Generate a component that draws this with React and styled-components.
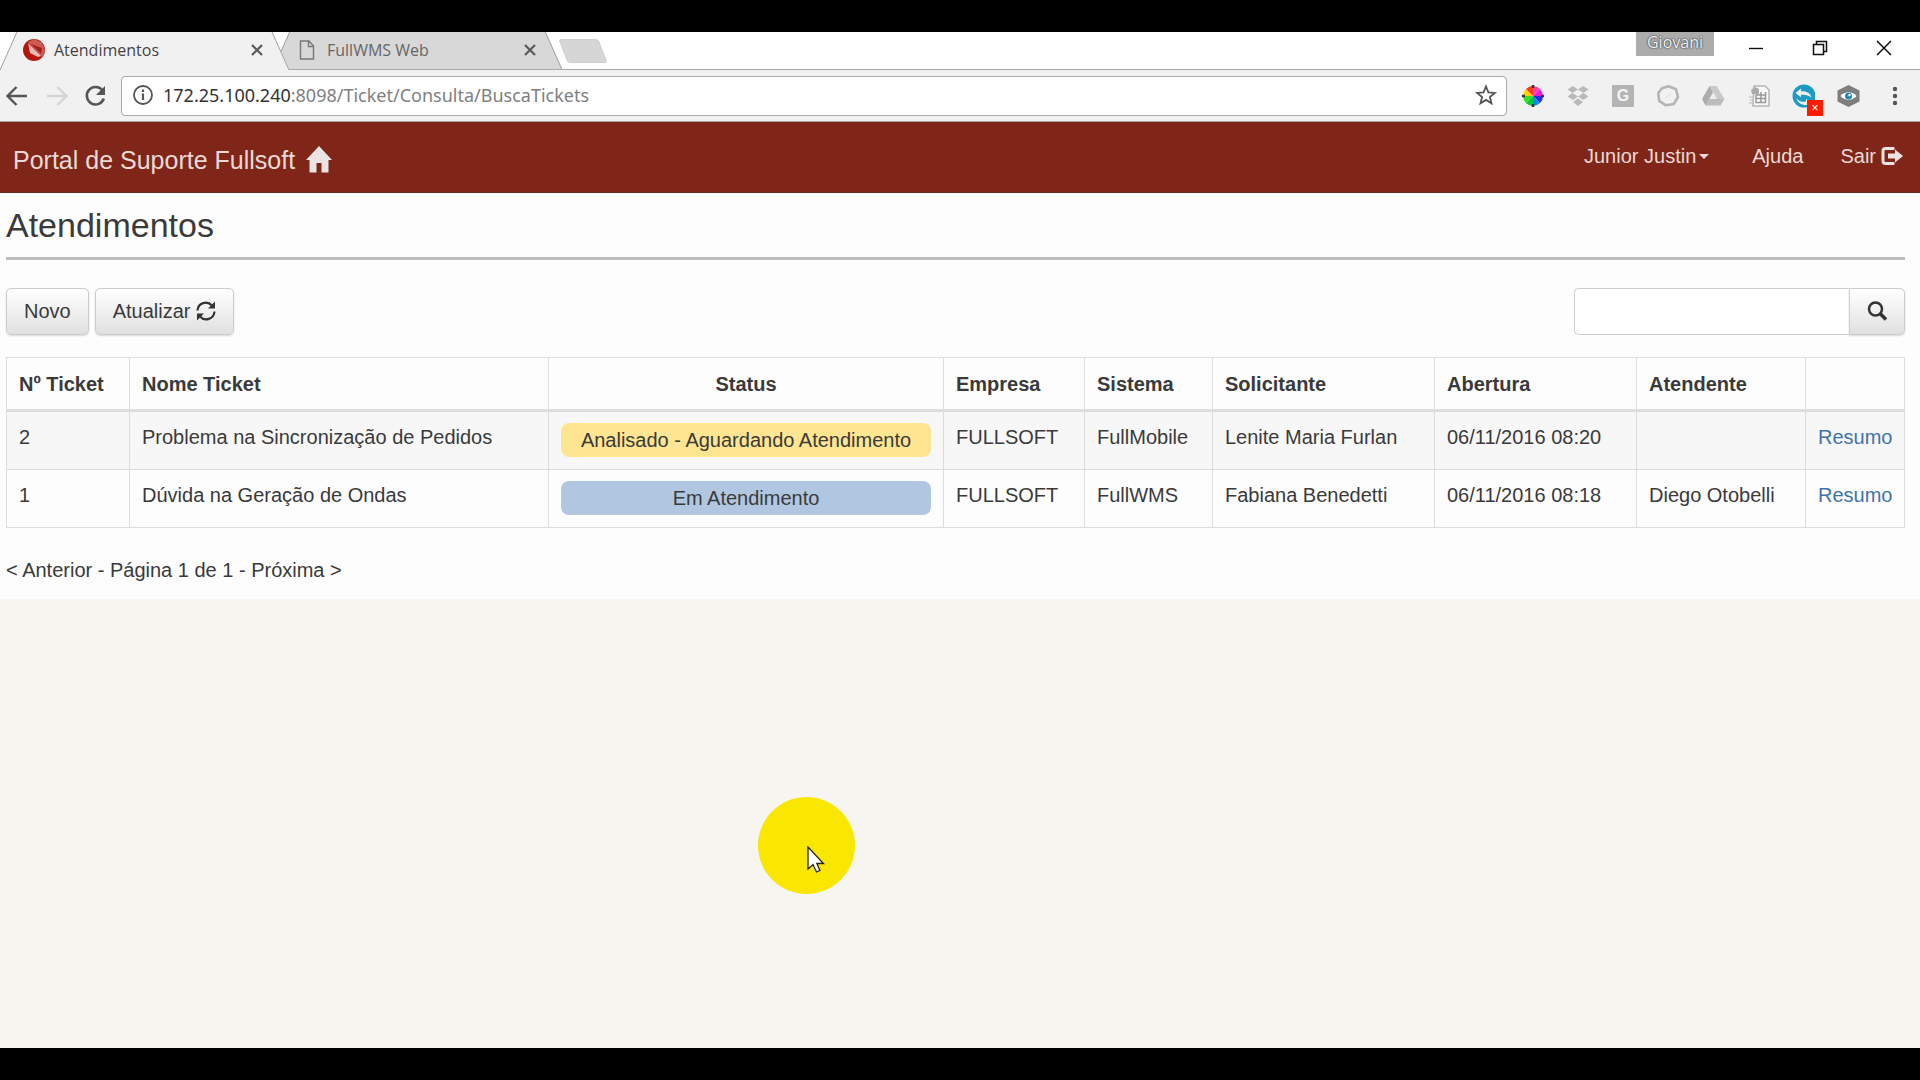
import React from 'react'
import styled, { createGlobalStyle, css } from 'styled-components'

const GlobalStyle = createGlobalStyle`
  * {
    box-sizing: border-box;
  }
  body {
    margin: 0;
    background: #000;
    color: #3a3a3a;
    font-family: "Liberation Sans", Arial, sans-serif;
    font-size: 20px;
    line-height: 28px;
  }
  button, input {
    font: inherit;
    color: inherit;
  }
  svg {
    display: block;
    flex: none;
  }
`;

const Screen = styled.div`
  min-height: 100vh;
  padding: 32px 0;
  display: flex;
  flex-direction: column;
`;

const IconButton = styled.button`
  width: ${props => props.$width || 24}px;
  height: 24px;
  padding: 0;
  border: none;
  background: none;
  color: #5a5a5a;
  position: relative;
  display: flex;
  align-items: center;
  justify-content: center;
  flex: none;
`;

/* browser window */

const TabStrip = styled.div`
  height: 38px;
  padding-left: 8px;
  background: #fefefe;
  border-bottom: 1px solid #a9a9a9;
  display: flex;
  font-family: "Open Sans", "Noto Sans", sans-serif;
  font-size: 16px;
`;

const tabEdge = css`
  content: "";
  position: absolute;
  z-index: -1;
  top: 0;
  bottom: ${props => (props.$active ? -1 : 0)}px;
  width: 60%;
  background: ${props => (props.$active ? '#f1f1f1' : '#d8d8d8')};
`;

const Tab = styled.div`
  position: relative;
  isolation: isolate;
  z-index: ${props => (props.$active ? 1 : 0)};
  width: 273px;
  padding: 0 12px 2px 14px;
  display: flex;
  align-items: center;
  gap: 8px;
  color: ${props => (props.$active ? '#444' : '#666')};
  &::before {
    ${tabEdge}
    left: 0;
    border-left: 1px solid #a0a0a0;
    transform: skewX(-24deg);
  }
  &::after {
    ${tabEdge}
    right: 0;
    border-right: 1px solid #a0a0a0;
    transform: skewX(24deg);
  }
`;

const TabTitle = styled.span`
  flex: 1;
`;

const NewTab = styled.button`
  width: 40px;
  height: 24px;
  margin: 7px 0 0 9px;
  padding: 0;
  border: 1px solid #cfcfcf;
  border-radius: 3px;
  background: #d6d6d6;
  transform: skewX(21deg);
`;

const WindowControls = styled.div`
  margin-left: auto;
  padding-right: 4px;
  display: flex;
`;

const Profile = styled.div`
  width: 78px;
  height: 24px;
  margin-right: 10px;
  background: #acacac;
  color: #f4f4f4;
  text-shadow: 0 0 2px #333, 0 0 1px #333;
  text-align: center;
  line-height: 20px;
`;

const WindowButton = styled(IconButton)`
  height: 32px;
  color: #111;
`;

const Toolbar = styled.div`
  height: 52px;
  padding: 0 15px 0 5px;
  background: #f1f1f1;
  border-bottom: 1px solid #b0a5a3;
  display: flex;
  align-items: center;
  gap: 14px;
`;

const NavButtons = styled.div`
  display: flex;
  gap: 15px;
`;

const AddressBar = styled.div`
  flex: 1;
  height: 40px;
  padding: 0 8px 2px 9px;
  border: 1px solid #a8a8a8;
  border-radius: 4px;
  background: #fff;
  display: flex;
  align-items: center;
  gap: 8px;
  font-family: "Noto Sans", "Open Sans", sans-serif;
  font-size: 18px;
`;

const Url = styled.span`
  flex: 1;
  color: #808080;
`;

const Host = styled.span`
  color: #333;
`;

const Extensions = styled.div`
  display: flex;
  gap: 21px;
`;

const Badge = styled.span`
  position: absolute;
  right: -8px;
  bottom: -8px;
  width: 16px;
  height: 16px;
  background: #ff1a00;
  color: #fff;
  font-size: 12px;
  line-height: 16px;
  text-align: center;
`;

/* portal */

const Portal = styled.div`
  flex: 1;
  background: #f7f5f0;
`;

const Navbar = styled.header`
  height: 71px;
  padding: 0 17px 0 13px;
  background: #7f2618;
  border-bottom: 1px solid #6c2a20;
  display: flex;
  align-items: center;
  justify-content: space-between;
`;

const Brand = styled.a`
  padding-top: 5px;
  display: flex;
  align-items: center;
  gap: 10px;
  color: #ead9d5;
  font-size: 25px;
  text-decoration: none;
`;

const Menu = styled.nav`
  padding-bottom: 2px;
  display: flex;
  gap: 37px;
`;

const menuItem = css`
  display: flex;
  align-items: center;
  gap: ${props => props.$gap || 0}px;
  color: #ead9d5;
`;

const MenuLink = styled.a`
  ${menuItem}
  text-decoration: none;
`;

const MenuButton = styled.button`
  ${menuItem}
  padding: 0 6px 0 0;
  border: none;
  background: none;
`;

const Caret = styled.span`
  border: 5px solid transparent;
  border-top-color: currentColor;
  border-bottom: none;
`;

const Content = styled.main`
  padding: 12px 15px 15px 6px;
  background: #fdfdfd;
`;

const Title = styled.h1`
  margin: 0;
  padding-bottom: 12px;
  border-bottom: 3px solid #bdbdbd;
  font-size: 34px;
  font-weight: 400;
  line-height: 40px;
`;

const Actions = styled.div`
  margin: 28px 0 22px;
  display: flex;
  gap: 6px;
`;

const Button = styled.button`
  height: 47px;
  padding: 0 17px 2px;
  border: 1px solid #ccc;
  border-radius: 5px;
  background: linear-gradient(#fff, #e0e0e0);
  box-shadow: 0 1px 2px rgba(0, 0, 0, 0.15);
  display: flex;
  align-items: center;
  gap: 5px;
`;

const SearchForm = styled.form`
  margin-left: auto;
  display: flex;
`;

const SearchInput = styled.input`
  width: 275px;
  height: 47px;
  padding: 0 16px;
  border: 1px solid #ccc;
  border-right: none;
  border-radius: 5px 0 0 5px;
  background: #fff;
`;

const SearchButton = styled(Button)`
  border-radius: 0 5px 5px 0;
`;

const Table = styled.table`
  width: 100%;
  table-layout: fixed;
  border-collapse: collapse;
`;

const Col = styled.col`
  width: ${props => (props.$width ? `${props.$width}px` : 'auto')};
`;

const Th = styled.th`
  padding: 12px 12px 11px;
  border: 1px solid #ddd;
  border-bottom-width: 3px;
  text-align: ${props => props.$align || 'left'};
  white-space: nowrap;
`;

const Td = styled.td`
  padding: 11px 12px 12px;
  border: 1px solid #ddd;
  vertical-align: top;
  white-space: nowrap;
`;

const Row = styled.tr`
  &:nth-child(odd) {
    background: #f7f7f7;
  }
`;

const Status = styled.div`
  padding: 3px 8px;
  border-radius: 8px;
  background: ${props => props.$color};
  text-align: center;
`;

const Link = styled.a`
  color: #3f73ab;
  text-decoration: none;
`;

const Pager = styled.p`
  margin: 28px 0 0;
`;

const Pointer = styled.div`
  position: absolute;
  left: 758px;
  top: 797px;
  width: 97px;
  height: 97px;
  padding: 49px 0 0 49px;
  border-radius: 50%;
  background: #f9e700;
`;

const columns = [
  { label: 'Nº Ticket', width: 123 },
  { label: 'Nome Ticket' },
  { label: 'Status', width: 395, align: 'center' },
  { label: 'Empresa', width: 141 },
  { label: 'Sistema', width: 128 },
  { label: 'Solicitante', width: 222 },
  { label: 'Abertura', width: 202 },
  { label: 'Atendente', width: 169 },
  { label: '', width: 99 },
];

const tickets = [
  {
    id: 2,
    name: 'Problema na Sincronização de Pedidos',
    status: 'Analisado - Aguardando Atendimento',
    color: '#fee591',
    company: 'FULLSOFT',
    system: 'FullMobile',
    requester: 'Lenite Maria Furlan',
    opened: '06/11/2016 08:20',
    attendant: '',
  },
  {
    id: 1,
    name: 'Dúvida na Geração de Ondas',
    status: 'Em Atendimento',
    color: '#b1c7e1',
    company: 'FULLSOFT',
    system: 'FullWMS',
    requester: 'Fabiana Benedetti',
    opened: '06/11/2016 08:18',
    attendant: 'Diego Otobelli',
  },
];

const Favicon = () => (
  <svg width="24" height="24" viewBox="0 0 24 24">
    <circle cx="12" cy="12" r="11" fill="#b5160f" />
    <path d="M6 4 L12 1 L19 4 L22 9 L23 14 L20 19 Z" fill="#cf5a54" />
    <path d="M6 5 L19 18 L16 19 L8 15 Z" fill="#ecb9b2" />
    <path d="M9 6 L20 10 L19 16 Z" fill="#a3211b" />
  </svg>
);

const PageIcon = () => (
  <svg width="24" height="24" viewBox="0 0 24 24" fill="none" stroke="#777" strokeWidth="1.4">
    <path d="M5.5 3 H14 L18.5 8 V21 H5.5 Z M13.5 3 V8.5 H18.5" />
  </svg>
);

const CloseIcon = () => (
  <svg width="14" height="14" viewBox="0 0 14 14" stroke="currentColor" strokeWidth="2.2">
    <path d="M2 2 L12 12 M12 2 L2 12" />
  </svg>
);

const ArrowIcon = ({ forward }) => (
  <svg width="24" height="24" viewBox="0 0 24 24" fill="none" stroke={forward ? '#d5d5d5' : '#555'} strokeWidth="2.4">
    <path d={forward ? 'M3 12 H22 M13.5 3 L22.5 12 L13.5 21' : 'M22 12 H3 M11.5 3 L2.5 12 L11.5 21'} />
  </svg>
);

const ReloadIcon = () => (
  <svg width="24" height="24" viewBox="0 0 24 24">
    <path d="M19.5 6.5 A8.7 8.7 0 1 0 20.8 14.5" fill="none" stroke="#555" strokeWidth="2.6" />
    <path d="M22 2 V11 H13 Z" fill="#555" />
  </svg>
);

const InfoIcon = () => (
  <svg width="24" height="24" viewBox="0 0 24 24" fill="none" stroke="#555" strokeWidth="1.8">
    <circle cx="12" cy="12" r="9" />
    <path d="M12 10.5 V17 M12 6.5 V9" strokeWidth="2.2" />
  </svg>
);

const StarIcon = () => (
  <svg width="24" height="24" viewBox="0 0 24 24" fill="none" stroke="#555" strokeWidth="1.8">
    <path d="M12 3.5 L14.4 9.4 L20.8 9.9 L15.9 14 L17.5 20.3 L12 16.9 L6.5 20.3 L8.1 14 L3.2 9.9 L9.6 9.4 Z" />
  </svg>
);

const wheel = ['#ff3fa8', '#e81be0', '#2a2ae8', '#0a8cf0', '#0fc53a', '#37e01c', '#ffd500', '#ff3a1a'];

const WheelIcon = () => (
  <svg width="24" height="24" viewBox="0 0 24 24">
    {wheel.map((color, i) => (
      <path key={color} d="M12 12 L12 2 A10 10 0 0 1 19.07 4.93 Z" fill={color} transform={`rotate(${i * 45} 12 12)`} />
    ))}
    <path d="M12 1 V4 M12 20 V23 M1 12 H4 M20 12 H23" stroke="#333" strokeWidth="2.5" />
  </svg>
);

const DropboxIcon = () => (
  <svg width="24" height="24" viewBox="0 0 24 24" fill="#b9b9b9">
    <path d="M7 2 L12 5.5 L6.5 9 L1.5 5.5 Z M17 2 L22.5 5.5 L17.5 9 L12 5.5 Z" />
    <path d="M1.5 12.5 L6.5 9 L12 12.5 L7 16 Z M22.5 12.5 L17.5 9 L12 12.5 L17 16 Z" />
    <path d="M12 14.5 L17 18 L12 22 L7 18 Z" />
  </svg>
);

const GIcon = styled.span`
  width: 22px;
  height: 22px;
  background: #b4b4b4;
  color: #f4f4f4;
  font-size: 16px;
  font-weight: 700;
  line-height: 22px;
`;

const HeptagonIcon = () => (
  <svg width="24" height="24" viewBox="0 0 24 24" fill="none" stroke="#b4b4b4" strokeWidth="2.6">
    <path d="M12.5 2.2 L20 5.2 L22 13 L17.8 20 L10 21.3 L3.2 16.8 L2.2 9 L6 4.2 Z" strokeLinejoin="round" />
    <path d="M9 14 L15 10" strokeWidth="1" stroke="#ddd" />
  </svg>
);

const DriveIcon = () => (
  <svg width="24" height="24" viewBox="0 0 24 24">
    <path d="M8.5 2 H15.5 L23.5 15 H16 Z" fill="#c9c9c9" />
    <path d="M8.5 2 L12 8.5 L4.5 21.5 L1 15 Z" fill="#adadad" />
    <path d="M8 15 H23.5 L19.5 21.5 H4.5 Z" fill="#bcbcbc" />
    <path d="M12.2 10 L15 15 H9.3 Z" fill="#eee" />
  </svg>
);

const SheetIcon = () => (
  <svg width="24" height="24" viewBox="0 0 24 24">
    <path d="M8 2 H19 L23 6 V22 H7 Z" fill="#f8f8f8" stroke="#b5b5b5" strokeWidth="1.5" />
    <path d="M10 11 H19.5 V18.5 H10 Z M15 8 V18.5 M10 14.5 H19.5 M19.5 8 V11" fill="none" stroke="#999" strokeWidth="1.5" />
    <path d="M5 6 L9 3 L13 5 V10 H6 Z" fill="#aaa" />
    <path d="M3 13 H8 M4 16 H8 M3 19 H8" stroke="#bbb" strokeWidth="1" />
  </svg>
);

const SyncIcon = () => (
  <svg width="24" height="24" viewBox="0 0 24 24">
    <circle cx="13" cy="12" r="11.5" fill="#1c9cc4" />
    <path d="M4.500 9 L10 4.500 V7.300 C15 6.500 19.500 9 20.500 13.500 C17 10.800 14 10.300 10 10.800 V13.300 Z" fill="#f1f1f1" />
    <path d="M5 14 C8 17.500 12 18.500 15 17.500 L15 15 L20 18 L16 21 C11 21.500 7 19 5 14 Z" fill="#f1f1f1" />
  </svg>
);

const EyeIcon = () => (
  <svg width="24" height="24" viewBox="0 0 24 24">
    <path d="M12.5 1 L23.5 6.500 V17.500 L12.5 23 L1.500 17.500 V6.500 Z" fill="#7e7e7e" />
    <path d="M4.500 12 C8.500 7 16.500 7 20.500 12 C16.500 17 8.500 17 4.500 12 Z" fill="#fff" />
    <circle cx="12.5" cy="12" r="3.5" fill="#2d86b8" />
    <circle cx="13.5" cy="11" r="1.2" fill="#fff" />
  </svg>
);

const DotsIcon = () => (
  <svg width="24" height="24" viewBox="0 0 24 24" fill="#555">
    <circle cx="14" cy="5" r="2.2" />
    <circle cx="14" cy="12" r="2.2" />
    <circle cx="14" cy="19" r="2.2" />
  </svg>
);

const MinimizeIcon = () => (
  <svg width="16" height="16" viewBox="0 0 16 16" stroke="currentColor" strokeWidth="1.4">
    <path d="M1 8.5 H15" />
  </svg>
);

const RestoreIcon = () => (
  <svg width="16" height="16" viewBox="0 0 16 16" fill="none" stroke="currentColor" strokeWidth="1.5">
    <path d="M1.5 4.5 H11.5 V14.5 H1.5 Z M4.5 4.5 V1.5 H14.5 V11.5 H11.5" />
  </svg>
);

const WindowCloseIcon = () => (
  <svg width="16" height="16" viewBox="0 0 16 16" stroke="currentColor" strokeWidth="1.5">
    <path d="M1 1 L15 15 M15 1 L1 15" />
  </svg>
);

const HomeIcon = () => (
  <svg width="28" height="28" viewBox="0 0 28 28" fill="#ece4e2">
    <path d="M14 0 L27 14 H23.5 V26.5 H16.5 V17 H11.500 V26.5 H4.5 V14 H1 Z" />
  </svg>
);

const LogoutIcon = () => (
  <svg width="22" height="20" viewBox="0 0 22 20">
    <path d="M13.5 2.500 H4.500 Q2 2.500 2 5 V15 Q2 17.500 4.500 17.500 H13.500" fill="none" stroke="#ece4e2" strokeWidth="3" />
    <path d="M7 7.500 H14 V3.500 L22 10 L14 16.500 V12.500 H7 Z" fill="#ece4e2" />
  </svg>
);

const RefreshIcon = () => (
  <svg width="20" height="20" viewBox="0 0 20 20" fill="none" stroke="#333" strokeWidth="2.2">
    <path d="M1.5 9.5 C2 2 11 -1 16 4.5 M18.5 10.5 C18 18 9 21 4 15.5" />
    <path d="M19 0.5 V7.5 H12 Z M1 19.5 V12.5 H8 Z" fill="#333" stroke="none" />
  </svg>
);

const SearchIcon = () => (
  <svg width="20" height="20" viewBox="0 0 20 20" fill="none" stroke="#333">
    <circle cx="8.5" cy="8" r="6.5" strokeWidth="2.5" />
    <path d="M13 12.5 L19 18.5" strokeWidth="3.5" />
  </svg>
);

const CursorIcon = () => (
  <svg width="20" height="28" viewBox="0 0 20 28">
    <path d="M1 1 V23 L6 18.5 L9.5 26 L13 24.5 L9.8 17.5 H16.5 Z" fill="#fff" stroke="#222" strokeWidth="1.3" />
  </svg>
);

const extensions = [
  { name: 'Cores', icon: <WheelIcon /> },
  { name: 'Dropbox', icon: <DropboxIcon /> },
  { name: 'G', icon: <GIcon>G</GIcon> },
  { name: 'Polígono', icon: <HeptagonIcon /> },
  { name: 'Drive', icon: <DriveIcon /> },
  { name: 'Planilha', icon: <SheetIcon /> },
  { name: 'Sincronizar', icon: <SyncIcon />, badge: '×' },
  { name: 'Visualizar', icon: <EyeIcon /> },
  { name: 'Menu', icon: <DotsIcon /> },
];

function Browser() {
  return (
    <>
      <TabStrip>
        <Tab $active>
          <Favicon />
          <TabTitle>Atendimentos</TabTitle>
          <IconButton aria-label="Fechar guia"><CloseIcon /></IconButton>
        </Tab>
        <Tab>
          <PageIcon />
          <TabTitle>FullWMS Web</TabTitle>
          <IconButton aria-label="Fechar guia"><CloseIcon /></IconButton>
        </Tab>
        <NewTab aria-label="Nova guia" />
        <WindowControls>
          <Profile>Giovani</Profile>
          <WindowButton $width={64} aria-label="Minimizar"><MinimizeIcon /></WindowButton>
          <WindowButton $width={64} aria-label="Restaurar"><RestoreIcon /></WindowButton>
          <WindowButton $width={64} aria-label="Fechar"><WindowCloseIcon /></WindowButton>
        </WindowControls>
      </TabStrip>
      <Toolbar>
        <NavButtons>
          <IconButton aria-label="Voltar"><ArrowIcon /></IconButton>
          <IconButton aria-label="Avançar"><ArrowIcon forward /></IconButton>
          <IconButton aria-label="Recarregar"><ReloadIcon /></IconButton>
        </NavButtons>
        <AddressBar>
          <InfoIcon />
          <Url><Host>172.25.100.240</Host>:8098/Ticket/Consulta/BuscaTickets</Url>
          <IconButton aria-label="Favorito"><StarIcon /></IconButton>
        </AddressBar>
        <Extensions>
          {extensions.map(ext => (
            <IconButton key={ext.name} aria-label={ext.name}>
              {ext.icon}
              {ext.badge && <Badge>{ext.badge}</Badge>}
            </IconButton>
          ))}
        </Extensions>
      </Toolbar>
    </>
  )
}

function TicketTable() {
  return (
    <Table>
      <colgroup>
        {columns.map(col => <Col key={col.label} $width={col.width} />)}
      </colgroup>
      <thead>
        <tr>
          {columns.map(col => <Th key={col.label} $align={col.align}>{col.label}</Th>)}
        </tr>
      </thead>
      <tbody>
        {tickets.map(ticket => (
          <Row key={ticket.id}>
            <Td>{ticket.id}</Td>
            <Td>{ticket.name}</Td>
            <Td><Status $color={ticket.color}>{ticket.status}</Status></Td>
            <Td>{ticket.company}</Td>
            <Td>{ticket.system}</Td>
            <Td>{ticket.requester}</Td>
            <Td>{ticket.opened}</Td>
            <Td>{ticket.attendant}</Td>
            <Td><Link href="#resumo">Resumo</Link></Td>
          </Row>
        ))}
      </tbody>
    </Table>
  )
}

export default function App() {
  return (
    <Screen>
      <GlobalStyle />
      <Browser />
      <Portal>
        <Navbar>
          <Brand href="#inicio">Portal de Suporte Fullsoft <HomeIcon /></Brand>
          <Menu>
            <MenuButton $gap={3}>Junior Justin<Caret /></MenuButton>
            <MenuLink href="#ajuda">Ajuda</MenuLink>
            <MenuLink href="#sair" $gap={5}>Sair <LogoutIcon /></MenuLink>
          </Menu>
        </Navbar>
        <Content>
          <Title>Atendimentos</Title>
          <Actions>
            <Button>Novo</Button>
            <Button>Atualizar <RefreshIcon /></Button>
            <SearchForm>
              <SearchInput type="text" aria-label="Buscar tickets" />
              <SearchButton type="button" aria-label="Buscar"><SearchIcon /></SearchButton>
            </SearchForm>
          </Actions>
          <TicketTable />
          <Pager>&lt; Anterior - Página 1 de 1 - Próxima &gt;</Pager>
        </Content>
      </Portal>
      <Pointer><CursorIcon /></Pointer>
    </Screen>
  )
}
